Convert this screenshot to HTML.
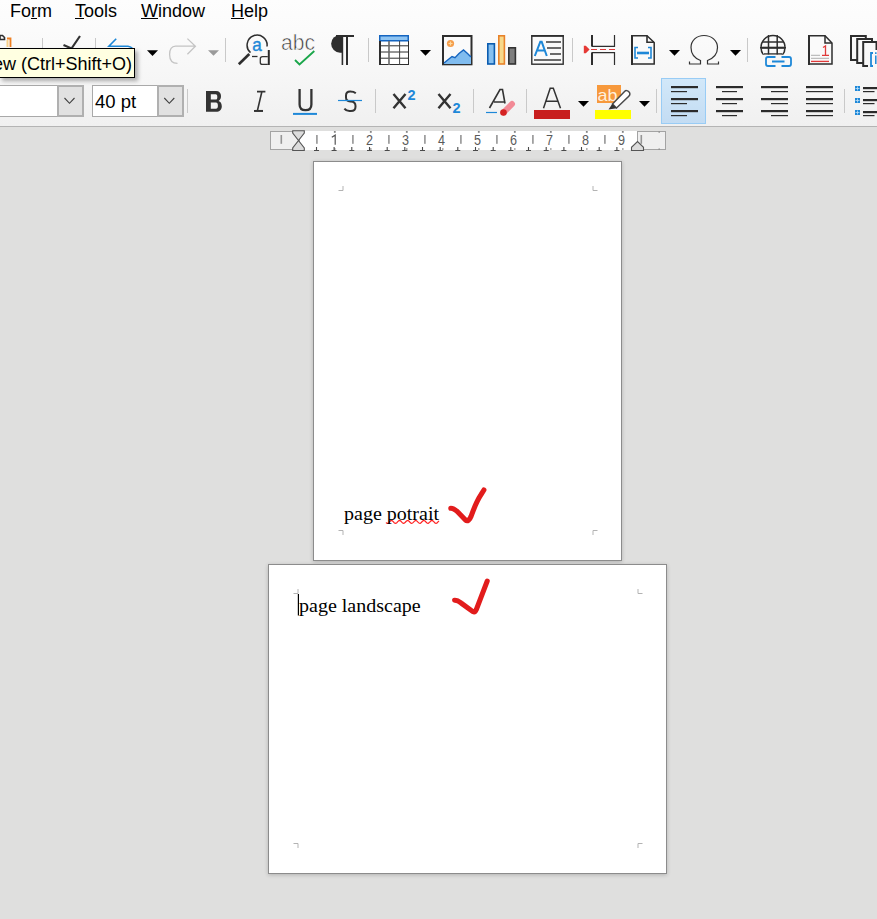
<!DOCTYPE html>
<html><head><meta charset="utf-8">
<style>
*{margin:0;padding:0;box-sizing:border-box}
html,body{width:877px;height:919px;overflow:hidden;background:#dfdfde;font-family:"Liberation Sans",sans-serif;position:relative}
.a{position:absolute}
#top{left:0;top:0;width:877px;height:127px;background:linear-gradient(#fdfdfd 0px,#fbfbfb 30px,#f6f6f6 80px,#f0f0f0 126px)}
#topline{left:0;top:126px;width:877px;height:1px;background:#b4b4b4}
.menu{top:0px;font-size:18px;color:#000;line-height:22px;white-space:nowrap}
.ul{text-decoration:underline;text-underline-offset:1px;text-decoration-thickness:1px}
.page{background:#fff;border:1px solid #8c8c8c;box-shadow:0 1px 4px rgba(0,0,0,.2)}
svg{position:absolute;left:0;top:0}
.txt{font:19px 'Liberation Serif';line-height:23px;transform:scaleX(1.053);transform-origin:0 0;white-space:nowrap}
</style></head><body>
<div id="top" class="a"></div>
<div id="topline" class="a"></div>

<div class="a menu" style="left:10px">Fo<span class="ul">r</span>m</div>
<div class="a menu" style="left:75px"><span class="ul">T</span>ools</div>
<div class="a menu" style="left:141px"><span class="ul">W</span>indow</div>
<div class="a menu" style="left:231px"><span class="ul">H</span>elp</div>

<div class="a" style="left:-2px;top:85px;width:86px;height:32px;background:#fff;border:1px solid #a9a9a9"></div>
<div class="a" style="left:57px;top:85px;width:27px;height:32px;background:#e1e1e1;border:2px solid #b0b0b0"></div>
<div class="a" style="left:92px;top:85px;width:92px;height:32px;background:#fff;border:1px solid #a9a9a9"></div>
<div class="a" style="left:157px;top:85px;width:27px;height:32px;background:#e1e1e1;border:2px solid #b0b0b0"></div>
<div class="a" style="left:95px;top:90px;font-size:18.5px;line-height:24px">40 pt</div>

<div class="a page" style="left:313px;top:161px;width:309px;height:400px"></div>
<div class="a page" style="left:268px;top:564px;width:399px;height:310px"></div>

<svg width="877" height="919" viewBox="0 0 877 919">
<line x1="42.5" y1="38" x2="42.5" y2="62" stroke="#c9c9c9" stroke-width="1"/>
<line x1="95.5" y1="38" x2="95.5" y2="62" stroke="#c9c9c9" stroke-width="1"/>
<line x1="225.5" y1="38" x2="225.5" y2="62" stroke="#c9c9c9" stroke-width="1"/>
<line x1="368.5" y1="38" x2="368.5" y2="62" stroke="#c9c9c9" stroke-width="1"/>
<line x1="572.5" y1="38" x2="572.5" y2="62" stroke="#c9c9c9" stroke-width="1"/>
<line x1="747.5" y1="38" x2="747.5" y2="62" stroke="#c9c9c9" stroke-width="1"/>
<path d="M0,35.5 H2.5 L4.5,37.5 V39.5 H0 Z" fill="none" stroke="#2e2e2e" stroke-width="1.6"/>
<path d="M7,38.5 H10.5 V47" fill="none" stroke="#ee7f22" stroke-width="1.8"/>
<path d="M7.5,40 V47" stroke="#f8d08a" stroke-width="2"/>
<path d="M63.5,45 L71.5,48.5 L80,36" fill="none" stroke="#333" stroke-width="2.2"/>
<path d="M116.2,38.7 L108.9,46.2 L128,46.2 Q131,46.5 133,49" fill="none" stroke="#1e88d8" stroke-width="1.6"/>
<path d="M147,50.3 H158 L152.5,56.0 Z" fill="#000"/>
<path d="M175.5,46.2 H195.4 M187.4,38.6 L195.4,46.2 L187.4,54.3 M175.5,46.2 C171.5,46.4 169.6,49.5 169.6,54.5 C169.6,60 172,63.4 177.5,63.4" fill="none" stroke="#c4c4c4" stroke-width="1.3"/>
<path d="M208,50.2 H219 L213.5,55.800000000000004 Z" fill="#9a9a9a"/>
<path d="M267,46.5 A10,10 0 1 0 250.5,52.6" fill="none" stroke="#2e2e2e" stroke-width="1.5"/>
<path d="M238.8,64.2 L249.3,54" stroke="#2e2e2e" stroke-width="2.6"/>
<path d="M252,56.5 H257.5" stroke="#2e2e2e" stroke-width="1.3"/>
<text x="252.3" y="51.2" font-family="Liberation Sans" font-size="18.5" fill="#1e88d8" stroke="#1e88d8" stroke-width="0.4" textLength="9.5" lengthAdjust="spacingAndGlyphs">a</text>
<path d="M268.8,50 V65" stroke="#2a2a2a" stroke-width="2"/>
<path d="M267.8,56.6 H262.5 Q260.3,56.6 260.3,58.8 V62.4 Q260.3,64.4 262.5,64.4 H267.8" fill="none" stroke="#333" stroke-width="1.3"/>
<text x="281" y="49.7" font-family="Liberation Sans" font-size="21.5" fill="#3a3a3a" stroke="#fafafa" stroke-width="0.6" textLength="34" lengthAdjust="spacingAndGlyphs">abc</text>
<path d="M295,60 L299.5,64.5 L314.3,51" fill="none" stroke="#1aa64a" stroke-width="1.8"/>
<path d="M336,36 H354" stroke="#2e2e2e" stroke-width="2"/>
<path d="M342.5,35 V52.7 H340 A8.8,8.8 0 0 1 340,35 Z" fill="#2e2e2e"/>
<path d="M342.4,36 V65" stroke="#2e2e2e" stroke-width="1.6"/>
<path d="M347,36 V65" stroke="#2e2e2e" stroke-width="2"/>
<rect x="379" y="35" width="30" height="30" fill="#fff"/>
<rect x="379" y="35" width="30" height="6.5" fill="#1565c0"/>
<rect x="380.5" y="36.5" width="27" height="3.5" fill="#8ec4f2"/>
<path d="M380,41 V65 M379,64.5 H409 M408.5,41 V65 M379,45.8 H409 M379,52 H409 M379,58.2 H409" fill="none" stroke="#2e2e2e" stroke-width="1"/>
<path d="M380,41 V65" stroke="#2e2e2e" stroke-width="2"/>
<path d="M389,41 V65" stroke="#6a6a6a" stroke-width="1.6"/>
<path d="M399.6,41 V65" stroke="#444" stroke-width="1"/>
<path d="M420,50 H431 L425.5,55.7 Z" fill="#000"/>
<rect x="443" y="36" width="28.5" height="28.3" fill="#fafafa" stroke="#2e2e2e" stroke-width="2"/>
<path d="M444,64 L444,63 L452,56.5 L455,57.7 L459,53.5 L463.5,50 L467.5,53.5 L471,57 V64 Z" fill="#80bcef"/>
<path d="M444,63 L452,56.5 L455,57.7 L459,53.5 L463.5,50 L467.5,53.5 L471,57" fill="none" stroke="#1565c0" stroke-width="1.4"/>
<rect x="442" y="35" width="30" height="30" fill="none" stroke="#2e2e2e" stroke-width="0"/>
<circle cx="450.5" cy="43.5" r="3.6" fill="#f59d4a"/>
<path d="M450.5,41.5 V45.5 M448.5,43.5 H452.5" stroke="#fcd9a0" stroke-width="1.2"/>
<rect x="487.8" y="43.8" width="6.6" height="20.2" fill="#86c0f0" stroke="#0b5cb0" stroke-width="1.6"/>
<rect x="498.8" y="35.8" width="5.6" height="28.2" fill="#f7d98b" stroke="#e8822a" stroke-width="1.6"/>
<rect x="508.8" y="47.8" width="6.6" height="16.2" fill="#7e7e7e" stroke="#333" stroke-width="1.6"/>
<rect x="531.8" y="35.8" width="31.4" height="28.4" fill="#fafafa" stroke="#2e2e2e" stroke-width="1.4"/><path d="M531.2,35.9 H563.8" stroke="#2e2e2e" stroke-width="1.8"/>
<path d="M534.8,56 L540.3,41.8 H541.7 L546.8,56 M536.8,50.6 H545" fill="none" stroke="#1e88d8" stroke-width="2"/>
<path d="M546,42 H561 M547,48 H561 M550,54 H561 M534,60 H561" stroke="#6b6b6b" stroke-width="1.8"/>
<path d="M592,35 V46.4 H614.5 V35" fill="none" stroke="#2e2e2e" stroke-width="1.2"/>
<path d="M592,35 V46" stroke="#2e2e2e" stroke-width="2"/>
<path d="M592,65 V52.6 H614.5 V65" fill="none" stroke="#2e2e2e" stroke-width="1.2"/>
<path d="M592,53 V65" stroke="#2e2e2e" stroke-width="2"/>
<path d="M591,49.5 H597 M600,49.5 H606 M609,49.5 H615" stroke="#e0383a" stroke-width="1.2"/>
<path d="M583.8,45.8 H585.8 L589.6,49.5 L585.8,53.2 H583.8 Z" fill="#e53935"/>
<path d="M632,64 V35.8 H647 L654.2,42.5 V64 Z" fill="#fafafa" stroke="#2e2e2e" stroke-width="1.5"/>
<path d="M632,35 V65" stroke="#2e2e2e" stroke-width="2"/>
<path d="M647,35.5 V42.2 H654" fill="none" stroke="#2e2e2e" stroke-width="1.6"/>
<path d="M638,47.5 H635 V58 H638 M648,47.5 H651 V58 H648" fill="none" stroke="#1e88d8" stroke-width="1.6"/>
<path d="M637,53 H649" stroke="#1e88d8" stroke-width="2.6"/>
<path d="M669,50 H680 L674.5,55.7 Z" fill="#000"/>
<path d="M689.5,61.5 V64 H700.5 V60.5 C694,58 691,53.5 691,47.5 C691,40.5 696.5,35.5 704,35.5 C711.5,35.5 717.5,40.5 717.5,47.5 C717.5,53.5 714,58 707.5,60.5 V64 H718.5 V61.5" fill="none" stroke="#333" stroke-width="1.2"/>
<path d="M730,50 H741 L735.5,55.7 Z" fill="#000"/>
<clipPath id="gc"><rect x="755" y="30" width="40" height="24.8"/></clipPath>
<g clip-path="url(#gc)"><circle cx="773" cy="47.5" r="12" fill="#fafafa" stroke="#2e2e2e" stroke-width="1.5"/>
<path d="M760,47.7 H786 M762,41.9 H784 M768.5,35 V55 M777.2,35 V55 M764,54 H782" stroke="#2e2e2e" stroke-width="1.5"/></g>
<path d="M762,47.7 H784" stroke="#2e2e2e" stroke-width="2"/>
<path d="M775.5,57 H768 Q766,57 766,59 V64 Q766,66 768,66 H775.5 M781.5,57 H789 Q791,57 791,59 V64 Q791,66 789,66 H781.5 M772,61.5 H784.5" fill="none" stroke="#1e88d8" stroke-width="1.8"/>
<path d="M809,64 V35.8 H825 L832,43 V64 Z" fill="#fafafa" stroke="#2e2e2e" stroke-width="1.5"/>
<path d="M809,35 V65" stroke="#2e2e2e" stroke-width="2"/>
<path d="M825,35.5 V43 H832" fill="none" stroke="#2e2e2e" stroke-width="1.5"/>
<path d="M823,47.5 L825.5,46 V55 M822,55.3 H829" fill="none" stroke="#e03a3a" stroke-width="1.3"/>
<path d="M811,55.3 H820 M811,58.4 H829" stroke="#bdbdbd" stroke-width="1.2"/>
<path d="M811,61.4 H829" stroke="#e03a3a" stroke-width="1.3"/>
<path d="M865.8,38.5 V36 H851 V60 H857" fill="none" stroke="#2e2e2e" stroke-width="2"/>
<path d="M872,41.5 V39 H857.2 V63 H863" fill="none" stroke="#2e2e2e" stroke-width="2"/>
<path d="M878,42 H863.2 V66 H868" fill="none" stroke="#2e2e2e" stroke-width="2"/>
<path d="M876.5,42 V50" stroke="#2e2e2e" stroke-width="2"/>
<path d="M873,53 H871 V66 H873" fill="none" stroke="#1e88d8" stroke-width="1.8"/>
<path d="M875.8,55.5 V64 M875.8,52.3 V54" stroke="#1e88d8" stroke-width="1.5"/>
<line x1="187.5" y1="89" x2="187.5" y2="113" stroke="#c9c9c9" stroke-width="1"/>
<line x1="375.5" y1="89" x2="375.5" y2="113" stroke="#c9c9c9" stroke-width="1"/>
<line x1="473.5" y1="89" x2="473.5" y2="113" stroke="#c9c9c9" stroke-width="1"/>
<line x1="526.5" y1="89" x2="526.5" y2="113" stroke="#c9c9c9" stroke-width="1"/>
<line x1="656.5" y1="89" x2="656.5" y2="113" stroke="#c9c9c9" stroke-width="1"/>
<line x1="844.5" y1="89" x2="844.5" y2="113" stroke="#c9c9c9" stroke-width="1"/>
<path d="M64.5,98 L69.5,103.3 L74.5,98" fill="none" stroke="#404040" stroke-width="1.1"/>
<path d="M164.3,98 L169.3,103.3 L174.3,98" fill="none" stroke="#404040" stroke-width="1.1"/>
<path fill-rule="evenodd" fill="#333" d="M206,91 H216 C219.3,91 221,93 221,96 C221,98.4 220.2,100 218.6,100.9 C220.6,101.6 221.8,103.4 221.8,106.2 C221.8,109.7 219.7,111.8 216,111.8 H206 Z M210.8,94.2 V99.6 H215.6 C216.9,99.6 217.3,98.6 217.3,96.9 C217.3,95.1 216.9,94.2 215.6,94.2 Z M210.8,102.6 V108.7 H215.9 C217.3,108.7 217.9,107.7 217.9,105.7 C217.9,103.6 217.3,102.6 215.9,102.6 Z"/>
<path d="M257,91.6 H265.4 M254,110.9 H263 M261.8,92 L257.4,110.6" fill="none" stroke="#333" stroke-width="1.6"/>
<path d="M254,110.9 H263" stroke="#333" stroke-width="1.9"/>
<path d="M299.6,89 V104.5 C299.6,108.5 301.5,110.2 305.5,110.2 C309.5,110.2 311.4,108.5 311.4,104.5 V89" fill="none" stroke="#333" stroke-width="2.3"/>
<rect x="293" y="112.9" width="24" height="2" fill="#1e88d8"/>
<path d="M355.8,93.3 C354.5,92.2 352.3,91.6 350.2,91.6 C347.5,91.6 346,93 346,95.6 V97.6 C346,100.2 347.6,101.4 350.3,101.4 H351 C354,101.4 355.5,103 355.5,106 V106.8 C355.5,109.6 353.9,111.1 350.9,111.1 H349.4 C347.3,111.1 345.6,110.2 344.4,108.6" fill="none" stroke="#333" stroke-width="2"/>
<rect x="338" y="99.9" width="24" height="1.2" fill="#1e88d8"/>
<path d="M393.5,94 L405.5,108.3 M405.5,94 L393.5,108.3" stroke="#333" stroke-width="2.4"/>
<path d="M438.5,94 L450.5,108.3 M450.5,94 L438.5,108.3" stroke="#333" stroke-width="2.4"/>
<text x="407.5" y="100" font-family="Liberation Sans" font-weight="bold" font-size="14.5" fill="#1e88d8">2</text>
<text x="452.5" y="113" font-family="Liberation Sans" font-weight="bold" font-size="14.5" fill="#1e88d8">2</text>
<path d="M489.5,108 L500,89.5 H502.5 L505,103.5 M494,102 H505" fill="none" stroke="#333" stroke-width="1.6"/>
<path d="M486,112.5 H497" stroke="#1e88d8" stroke-width="1.2"/>
<path d="M503.5,112.5 L512,104" stroke="#f28a96" stroke-width="6" stroke-linecap="round"/>
<circle cx="503.5" cy="112.5" r="3.3" fill="#d42222"/>
<path d="M543.5,108.3 L550.2,88.3 H553.3 L560.5,108.3 M546.3,101.3 H557.8" fill="none" stroke="#333" stroke-width="1.5"/>
<rect x="534" y="110" width="36" height="9" fill="#c81e1e"/>
<path d="M578,101 H589 L583.5,106.7 Z" fill="#000"/>
<rect x="597" y="85" width="24" height="18" fill="#f7993c"/>
<text x="597.5" y="100.5" font-family="Liberation Sans" font-size="17" fill="#fff0dc" textLength="20" lengthAdjust="spacingAndGlyphs">ab</text>
<path d="M612.5,104 L624.3,91.7 Q626.5,89.5 628.8,91.8 Q631,94 628.8,96.2 L616.5,108 Z" fill="#fff" stroke="#4a4a4a" stroke-width="1.5"/>
<path d="M608.5,109.5 L612.2,104 L616.8,108.3 Z" fill="#333"/>
<rect x="595" y="110" width="36" height="9" fill="#ffff00"/>
<path d="M639,101 H650 L644.5,106.7 Z" fill="#000"/>
<linearGradient id="hl" x1="0" y1="0" x2="0" y2="1"><stop offset="0" stop-color="#d2e8f9"/><stop offset="1" stop-color="#c3dcf3"/></linearGradient>
<rect x="661.5" y="78.5" width="44" height="45" fill="url(#hl)" stroke="#99ccf5" stroke-width="1"/>
<rect x="671" y="86" width="27" height="2.2" fill="#2b2b2b"/>
<rect x="671" y="91.0" width="16" height="1.2" fill="#2b2b2b"/>
<rect x="671" y="98" width="27" height="2.2" fill="#2b2b2b"/>
<rect x="671" y="103.0" width="16" height="1.2" fill="#2b2b2b"/>
<rect x="671" y="110" width="27" height="2.2" fill="#2b2b2b"/>
<rect x="671" y="115.0" width="16" height="1.2" fill="#2b2b2b"/>
<rect x="716" y="86" width="27" height="2.2" fill="#2b2b2b"/>
<rect x="722.0" y="91.0" width="15.0" height="1.2" fill="#2b2b2b"/>
<rect x="716" y="98" width="27" height="2.2" fill="#2b2b2b"/>
<rect x="722.0" y="103.0" width="15.0" height="1.2" fill="#2b2b2b"/>
<rect x="716" y="110" width="27" height="2.2" fill="#2b2b2b"/>
<rect x="722.0" y="115.0" width="15.0" height="1.2" fill="#2b2b2b"/>
<rect x="761" y="86" width="27" height="2.2" fill="#2b2b2b"/>
<rect x="771" y="91.0" width="17" height="1.2" fill="#2b2b2b"/>
<rect x="761" y="98" width="27" height="2.2" fill="#2b2b2b"/>
<rect x="771" y="103.0" width="17" height="1.2" fill="#2b2b2b"/>
<rect x="761" y="110" width="27" height="2.2" fill="#2b2b2b"/>
<rect x="771" y="115.0" width="17" height="1.2" fill="#2b2b2b"/>
<rect x="806" y="86" width="27" height="2.2" fill="#2b2b2b"/>
<rect x="806" y="91.0" width="27" height="1.2" fill="#2b2b2b"/>
<rect x="806" y="98" width="27" height="2.2" fill="#2b2b2b"/>
<rect x="806" y="103.0" width="27" height="1.2" fill="#2b2b2b"/>
<rect x="806" y="110" width="27" height="2.2" fill="#2b2b2b"/>
<rect x="806" y="115.0" width="27" height="1.2" fill="#2b2b2b"/>
<rect x="855" y="86.0" width="5" height="5" fill="#1e88d8"/>
<path d="M857.5,86.5 V90.5 M855.5,88.5 H859.5" stroke="#bfe0f8" stroke-width="0.8"/>
<rect x="863" y="87.0" width="14" height="2.2" fill="#2b2b2b"/>
<rect x="863" y="91.0" width="11.5" height="1.2" fill="#2b2b2b"/>
<rect x="855" y="98.0" width="5" height="5" fill="#1e88d8"/>
<path d="M857.5,98.5 V102.5 M855.5,100.5 H859.5" stroke="#bfe0f8" stroke-width="0.8"/>
<rect x="863" y="99.0" width="14" height="2.2" fill="#2b2b2b"/>
<rect x="863" y="103.0" width="11.5" height="1.2" fill="#2b2b2b"/>
<rect x="855" y="110.0" width="5" height="5" fill="#1e88d8"/>
<path d="M857.5,110.5 V114.5 M855.5,112.5 H859.5" stroke="#bfe0f8" stroke-width="0.8"/>
<rect x="863" y="111.0" width="14" height="2.2" fill="#2b2b2b"/>
<rect x="863" y="115.0" width="11.5" height="1.2" fill="#2b2b2b"/>
<rect x="299" y="131" width="338" height="19" fill="#fff"/>
<rect x="270.5" y="131.5" width="29" height="18" fill="#efefef" stroke="#a3a3a3" stroke-width="1"/>
<rect x="637.5" y="131.5" width="28" height="18" fill="#efefef" stroke="#a3a3a3" stroke-width="1"/>
<rect x="280.5" y="135" width="1.6" height="8.8" fill="#959595"/>
<rect x="640.5" y="135" width="1.6" height="8.8" fill="#959595"/>
<rect x="316.1" y="135" width="1.6" height="8.8" fill="#959595"/>
<rect x="352.1" y="135" width="1.6" height="8.8" fill="#959595"/>
<rect x="388.1" y="135" width="1.6" height="8.8" fill="#959595"/>
<rect x="424.1" y="135" width="1.6" height="8.8" fill="#959595"/>
<rect x="460.1" y="135" width="1.6" height="8.8" fill="#959595"/>
<rect x="496.1" y="135" width="1.6" height="8.8" fill="#959595"/>
<rect x="532.1" y="135" width="1.6" height="8.8" fill="#959595"/>
<rect x="568.1" y="135" width="1.6" height="8.8" fill="#959595"/>
<rect x="604.1" y="135" width="1.6" height="8.8" fill="#959595"/>
<rect x="333.9" y="131" width="1.8" height="1.8" fill="#858585"/>
<rect x="334.0" y="148.2" width="1.6" height="1.6" fill="#a0a0a0"/>
<path d="M331.8,137.3 L335.2,135.2 V144.8" fill="none" stroke="#555" stroke-width="1.2"/>
<rect x="369.9" y="131" width="1.8" height="1.8" fill="#858585"/>
<rect x="370.0" y="148.2" width="1.6" height="1.6" fill="#a0a0a0"/>
<text x="369.4" y="144.9" text-anchor="middle" font-family="Liberation Sans" font-size="14" fill="#5a5a5a" transform="translate(369.4,0) scale(0.9,1) translate(-369.4,0)">2</text>
<rect x="405.9" y="131" width="1.8" height="1.8" fill="#858585"/>
<rect x="406.0" y="148.2" width="1.6" height="1.6" fill="#a0a0a0"/>
<text x="405.4" y="144.9" text-anchor="middle" font-family="Liberation Sans" font-size="14" fill="#5a5a5a" transform="translate(405.4,0) scale(0.9,1) translate(-405.4,0)">3</text>
<rect x="441.9" y="131" width="1.8" height="1.8" fill="#858585"/>
<rect x="442.0" y="148.2" width="1.6" height="1.6" fill="#a0a0a0"/>
<text x="441.4" y="144.9" text-anchor="middle" font-family="Liberation Sans" font-size="14" fill="#5a5a5a" transform="translate(441.4,0) scale(0.9,1) translate(-441.4,0)">4</text>
<rect x="477.9" y="131" width="1.8" height="1.8" fill="#858585"/>
<rect x="478.0" y="148.2" width="1.6" height="1.6" fill="#a0a0a0"/>
<text x="477.4" y="144.9" text-anchor="middle" font-family="Liberation Sans" font-size="14" fill="#5a5a5a" transform="translate(477.4,0) scale(0.9,1) translate(-477.4,0)">5</text>
<rect x="513.9" y="131" width="1.8" height="1.8" fill="#858585"/>
<rect x="514.0" y="148.2" width="1.6" height="1.6" fill="#a0a0a0"/>
<text x="513.4" y="144.9" text-anchor="middle" font-family="Liberation Sans" font-size="14" fill="#5a5a5a" transform="translate(513.4,0) scale(0.9,1) translate(-513.4,0)">6</text>
<rect x="549.9" y="131" width="1.8" height="1.8" fill="#858585"/>
<rect x="550.0" y="148.2" width="1.6" height="1.6" fill="#a0a0a0"/>
<text x="549.4" y="144.9" text-anchor="middle" font-family="Liberation Sans" font-size="14" fill="#5a5a5a" transform="translate(549.4,0) scale(0.9,1) translate(-549.4,0)">7</text>
<rect x="585.9" y="131" width="1.8" height="1.8" fill="#858585"/>
<rect x="586.0" y="148.2" width="1.6" height="1.6" fill="#a0a0a0"/>
<text x="585.4" y="144.9" text-anchor="middle" font-family="Liberation Sans" font-size="14" fill="#5a5a5a" transform="translate(585.4,0) scale(0.9,1) translate(-585.4,0)">8</text>
<rect x="621.9" y="131" width="1.8" height="1.8" fill="#858585"/>
<rect x="622.0" y="148.2" width="1.6" height="1.6" fill="#a0a0a0"/>
<text x="621.4" y="144.9" text-anchor="middle" font-family="Liberation Sans" font-size="14" fill="#5a5a5a" transform="translate(621.4,0) scale(0.9,1) translate(-621.4,0)">9</text>
<path d="M314.0,150.5 H319.0 M316.5,147 V150.5" stroke="#4a4a4a" stroke-width="1.1" fill="none"/>
<path d="M331.6,150.5 H336.6 M334.1,147 V150.5" stroke="#4a4a4a" stroke-width="1.1" fill="none"/>
<path d="M349.3,150.5 H354.3 M351.8,147 V150.5" stroke="#4a4a4a" stroke-width="1.1" fill="none"/>
<path d="M367.0,150.5 H372.0 M369.5,147 V150.5" stroke="#4a4a4a" stroke-width="1.1" fill="none"/>
<path d="M384.7,150.5 H389.7 M387.2,147 V150.5" stroke="#4a4a4a" stroke-width="1.1" fill="none"/>
<path d="M402.3,150.5 H407.3 M404.8,147 V150.5" stroke="#4a4a4a" stroke-width="1.1" fill="none"/>
<path d="M420.0,150.5 H425.0 M422.5,147 V150.5" stroke="#4a4a4a" stroke-width="1.1" fill="none"/>
<path d="M437.7,150.5 H442.7 M440.2,147 V150.5" stroke="#4a4a4a" stroke-width="1.1" fill="none"/>
<path d="M455.3,150.5 H460.3 M457.8,147 V150.5" stroke="#4a4a4a" stroke-width="1.1" fill="none"/>
<path d="M473.0,150.5 H478.0 M475.5,147 V150.5" stroke="#4a4a4a" stroke-width="1.1" fill="none"/>
<path d="M490.7,150.5 H495.7 M493.2,147 V150.5" stroke="#4a4a4a" stroke-width="1.1" fill="none"/>
<path d="M508.3,150.5 H513.3 M510.8,147 V150.5" stroke="#4a4a4a" stroke-width="1.1" fill="none"/>
<path d="M526.0,150.5 H531.0 M528.5,147 V150.5" stroke="#4a4a4a" stroke-width="1.1" fill="none"/>
<path d="M543.7,150.5 H548.7 M546.2,147 V150.5" stroke="#4a4a4a" stroke-width="1.1" fill="none"/>
<path d="M561.4,150.5 H566.4 M563.9,147 V150.5" stroke="#4a4a4a" stroke-width="1.1" fill="none"/>
<path d="M579.0,150.5 H584.0 M581.5,147 V150.5" stroke="#4a4a4a" stroke-width="1.1" fill="none"/>
<path d="M596.7,150.5 H601.7 M599.2,147 V150.5" stroke="#4a4a4a" stroke-width="1.1" fill="none"/>
<path d="M614.4,150.5 H619.4 M616.9,147 V150.5" stroke="#4a4a4a" stroke-width="1.1" fill="none"/>
<rect x="658.5" y="131.5" width="1.4" height="1.2" fill="#888"/><rect x="658.5" y="148.5" width="1.4" height="1.2" fill="#888"/>
<path d="M292.7,130.7 H304.3 V133 L298.5,140.5 L304.3,148 V150.5 H292.7 V148 L298.5,140.5 L292.7,133 Z" fill="#dcdcdc" stroke="#555" stroke-width="1.1"/>
<path d="M631.5,150.5 V147.3 L637.5,141.5 L643.5,147.3 V150.5 Z" fill="#dcdcdc" stroke="#555" stroke-width="1.1"/>
<path d="M338.5,190.5 H343.0 V186" fill="none" stroke="#b3b3b3" stroke-width="1"/>
<path d="M593.0,186 V190.5 H597.5" fill="none" stroke="#b3b3b3" stroke-width="1"/>
<path d="M338.5,530.5 H343.0 V535" fill="none" stroke="#b3b3b3" stroke-width="1"/>
<path d="M593.0,535 V530.5 H597.5" fill="none" stroke="#b3b3b3" stroke-width="1"/>
<path d="M293.5,593.5 H298.0 V589" fill="none" stroke="#b3b3b3" stroke-width="1"/>
<path d="M638.0,589 V593.5 H642.5" fill="none" stroke="#b3b3b3" stroke-width="1"/>
<path d="M293.5,843.5 H298.0 V848" fill="none" stroke="#b3b3b3" stroke-width="1"/>
<path d="M638.0,848 V843.5 H642.5" fill="none" stroke="#b3b3b3" stroke-width="1"/>
<path d="M450.8,508.2 C453.2,508.2 455.5,509.7 458.5,512.7 L465.5,520 C467.5,521.8 469.7,519.8 471.2,516 C473.7,509 476.7,501.3 480.7,495.2 L483.9,490" fill="none" stroke="#e21c1c" stroke-width="5.1" stroke-linecap="round" stroke-linejoin="round"/>
<path d="M454.6,600.2 C456.7,600.1 458.7,601.1 461.2,603.1 L471,610.3 C473.3,612.6 475,612.6 476.2,609.8 L487.2,581.2" fill="none" stroke="#e21c1c" stroke-width="5.1" stroke-linecap="round" stroke-linejoin="round"/>
<path d="M386.00,522.55 L386.50,522.97 L387.00,523.23 L387.50,523.30 L388.00,523.15 L388.50,522.82 L389.00,522.35 L389.50,521.82 L390.00,521.30 L390.50,520.86 L391.00,520.58 L391.50,520.50 L392.00,520.63 L392.50,520.94 L393.00,521.40 L393.50,521.93 L394.00,522.45 L394.50,522.90 L395.00,523.20 L395.50,523.30 L396.00,523.20 L396.50,522.90 L397.00,522.45 L397.50,521.93 L398.00,521.40 L398.50,520.94 L399.00,520.63 L399.50,520.50 L400.00,520.58 L400.50,520.86 L401.00,521.30 L401.50,521.82 L402.00,522.35 L402.50,522.82 L403.00,523.15 L403.50,523.30 L404.00,523.23 L404.50,522.97 L405.00,522.55 L405.50,522.04 L406.00,521.50 L406.50,521.02 L407.00,520.67 L407.50,520.51 L408.00,520.55 L408.50,520.79 L409.00,521.20 L409.50,521.71 L410.00,522.25 L410.50,522.74 L411.00,523.10 L411.50,523.28 L412.00,523.26 L412.50,523.04 L413.00,522.65 L413.50,522.14 L414.00,521.60 L414.50,521.11 L415.00,520.73 L415.50,520.53 L416.00,520.53 L416.50,520.73 L417.00,521.11 L417.50,521.60 L418.00,522.14 L418.50,522.65 L419.00,523.04 L419.50,523.26 L420.00,523.28 L420.50,523.10 L421.00,522.74 L421.50,522.25 L422.00,521.71 L422.50,521.20 L423.00,520.79 L423.50,520.55 L424.00,520.51 L424.50,520.67 L425.00,521.02 L425.50,521.50 L426.00,522.04 L426.50,522.55 L427.00,522.97 L427.50,523.23 L428.00,523.30 L428.50,523.15 L429.00,522.82 L429.50,522.35 L430.00,521.82 L430.50,521.30 L431.00,520.86 L431.50,520.58 L432.00,520.50 L432.50,520.63 L433.00,520.94 L433.50,521.40 L434.00,521.93 L434.50,522.45 L435.00,522.90 L435.50,523.20 L436.00,523.30 L436.50,523.20 L437.00,522.90 L437.50,522.45 L438.00,521.93 L438.50,521.40 L439.00,520.94" fill="none" stroke="#ff2020" stroke-width="1.2"/>
<rect x="297.8" y="594" width="1.2" height="21.5" fill="#000"/>
</svg>

<div class="a txt" style="left:344px;top:502px">page potrait</div>
<div class="a txt" style="left:299px;top:594px">page landscape</div>

<div class="a" style="left:-1px;top:48px;width:136px;height:30px;background:#ffffe1;border:1px solid #000;box-shadow:3px 3px 4px rgba(0,0,0,.3)"></div>
<div class="a" style="left:-30px;top:53px;width:162px;text-align:right;font-size:18px;line-height:22px;white-space:nowrap">ew (Ctrl+Shift+O)</div>
</body></html>
